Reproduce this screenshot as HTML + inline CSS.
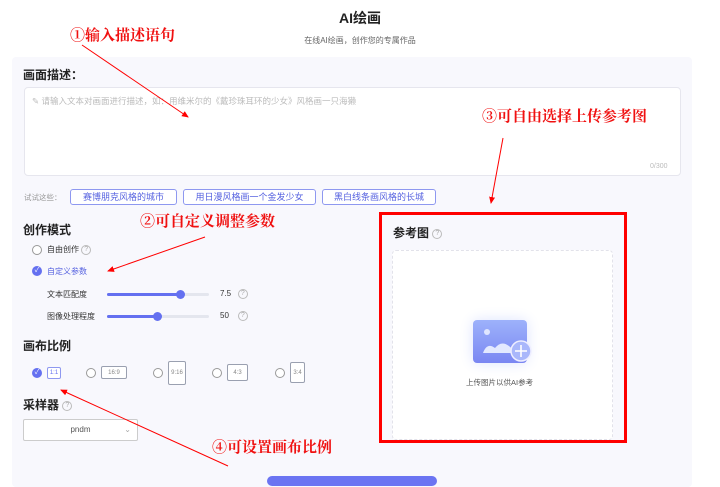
<!DOCTYPE html>
<html><head><meta charset="utf-8"><style>
*{margin:0;padding:0;box-sizing:border-box}
body{width:720px;height:481px;background:#fff;font-family:"Liberation Sans","Noto Sans CJK SC",sans-serif;position:relative;overflow:hidden;color:#222}
.a{position:absolute}
.panel{left:12px;top:57px;width:680px;height:430px;background:#f8f8fd;border-radius:4px}
.ta{left:24px;top:87px;width:657px;height:89px;background:#fff;border:1px solid #e6e6ee;border-radius:4px}
.h{font-size:12px;font-weight:bold;color:#222}
.tag{top:189px;height:16px;border:1px solid #8e98f0;border-radius:3px;font-size:9px;color:#5662e0;text-align:center;line-height:14px;background:#fff}
.red{font-family:"Noto Serif CJK SC",serif;color:#f01010;font-size:15px;font-weight:bold}
.q{display:inline-block;width:10px;height:10px;border:1px solid #bbb;border-radius:50%;font-size:7px;color:#aaa;text-align:center;line-height:8px;vertical-align:middle}
.rd{width:10px;height:10px;border:1px solid #999;border-radius:50%;background:#fff}
.ck{width:10px;height:10px;border-radius:50%;background:#6470f0;color:#fff;font-size:7px;text-align:center;line-height:10px}
.sm{font-size:8px;color:#333}
.box{border:1px solid #9aa0b0;border-radius:2px;font-size:6px;color:#888;background:#fff;display:flex;align-items:center;justify-content:center}
</style></head><body>
<div class="a" style="left:0;top:8px;width:720px;text-align:center;font-size:14px;font-weight:bold">AI绘画</div>
<div class="a" style="left:0;top:35px;width:720px;text-align:center;font-size:8px;color:#666">在线AI绘画，创作您的专属作品</div>
<div class="a panel"></div>
<div class="a h" style="left:23px;top:66px">画面描述：</div>
<div class="a ta"></div>
<div class="a" style="left:32px;top:95px;font-size:8.5px;color:#bbb">✎ 请输入文本对画面进行描述，如：用维米尔的《戴珍珠耳环的少女》风格画一只海獭</div>
<div class="a" style="left:650px;top:163px;font-size:7px;color:#bbb">0/300</div>
<div class="a" style="left:24px;top:192px;font-size:7.5px;color:#999">试试这些：</div>
<div class="a tag" style="left:70px;width:107px">赛博朋克风格的城市</div>
<div class="a tag" style="left:183px;width:133px">用日漫风格画一个金发少女</div>
<div class="a tag" style="left:322px;width:114px">黑白线条画风格的长城</div>
<div class="a h" style="left:23px;top:221px">创作模式</div>
<div class="a rd" style="left:32px;top:245px"></div>
<div class="a sm" style="left:47px;top:244px">自由创作 <span class="q">?</span></div>
<div class="a ck" style="left:32px;top:266px">✓</div>
<div class="a sm" style="left:47px;top:266px;color:#5662e0">自定义参数</div>
<div class="a sm" style="left:47px;top:289px">文本匹配度</div>
<div class="a" style="left:107px;top:293px;width:102px;height:3px;background:#e4e6ee;border-radius:2px"></div>
<div class="a" style="left:107px;top:293px;width:74px;height:3px;background:#6470f0;border-radius:2px"></div>
<div class="a" style="left:176px;top:290px;width:9px;height:9px;border-radius:50%;background:#6470f0"></div>
<div class="a sm" style="left:220px;top:289px">7.5 &nbsp;&nbsp;<span class="q">?</span></div>
<div class="a sm" style="left:47px;top:311px">图像处理程度</div>
<div class="a" style="left:107px;top:315px;width:102px;height:3px;background:#e4e6ee;border-radius:2px"></div>
<div class="a" style="left:107px;top:315px;width:50px;height:3px;background:#6470f0;border-radius:2px"></div>
<div class="a" style="left:153px;top:312px;width:9px;height:9px;border-radius:50%;background:#6470f0"></div>
<div class="a sm" style="left:220px;top:311px">50 &nbsp;&nbsp;&nbsp;<span class="q">?</span></div>
<div class="a h" style="left:23px;top:337px">画布比例</div>
<div class="a ck" style="left:32px;top:368px">✓</div>
<div class="a box" style="left:47px;top:367px;width:14px;height:12px;border-color:#8e98f0;color:#6470f0">1:1</div>
<div class="a rd" style="left:86px;top:368px"></div>
<div class="a box" style="left:101px;top:366px;width:26px;height:13px">16:9</div>
<div class="a rd" style="left:153px;top:368px"></div>
<div class="a box" style="left:168px;top:361px;width:18px;height:24px">9:16</div>
<div class="a rd" style="left:212px;top:368px"></div>
<div class="a box" style="left:227px;top:364px;width:21px;height:17px">4:3</div>
<div class="a rd" style="left:275px;top:368px"></div>
<div class="a box" style="left:290px;top:362px;width:15px;height:21px">3:4</div>
<div class="a h" style="left:23px;top:396px">采样器 <span class="q" style="font-weight:normal">?</span></div>
<div class="a" style="left:23px;top:419px;width:115px;height:22px;background:#fff;border:1px solid #ccc;border-radius:2px;font-size:8px;color:#555;text-align:center;line-height:20px">pndm<span style="position:absolute;right:6px;color:#aaa">⌄</span></div>
<div class="a" style="left:267px;top:476px;width:170px;height:10px;background:#6b74f2;border-radius:5px"></div>
<div class="a" style="left:379px;top:212px;width:248px;height:231px;border:3px solid #f00"></div>
<div class="a h" style="left:393px;top:224px">参考图 <span class="q" style="font-weight:normal">?</span></div>
<div class="a" style="left:392px;top:250px;width:221px;height:190px;background:#fff;border:1px dashed #e2e2ea;border-radius:4px"></div>
<div class="a" style="left:473px;top:320px;width:54px;height:43px;border-radius:4px;background:linear-gradient(#9db2fb,#7a86f2);box-shadow:0 0 14px #dde3ff"></div>
<svg class="a" style="left:473px;top:320px" width="60" height="50"><circle cx="14" cy="12" r="3" fill="#dfe6ff"/><path d="M10 33 Q14 22 22 28 Q30 18 40 30 L40 33 Z" fill="#e3e9ff"/><circle cx="48" cy="31" r="10" fill="#a9b7fb" stroke="#eef" stroke-width="1.5"/><path d="M48 25v12M42 31h12" stroke="#fff" stroke-width="1.6"/></svg>
<div class="a" style="left:466px;top:377px;font-size:7.5px;color:#555">上传图片以供AI参考</div>
<div class="a red" style="left:70px;top:24px">①输入描述语句</div>
<div class="a red" style="left:482px;top:105px">③可自由选择上传参考图</div>
<div class="a red" style="left:140px;top:210px">②可自定义调整参数</div>
<div class="a red" style="left:212px;top:436px">④可设置画布比例</div>
<svg class="a" style="left:0;top:0" width="720" height="481">
<defs><marker id="m" markerWidth="8" markerHeight="8" refX="6" refY="4" orient="auto"><path d="M0 1L7 4L0 7Z" fill="#f00"/></marker></defs>
<g stroke="#f00" stroke-width="1" fill="none" marker-end="url(#m)">
<line x1="82" y1="45" x2="188" y2="117"/>
<line x1="503" y1="138" x2="491" y2="203"/>
<line x1="205" y1="237" x2="108" y2="271"/>
<line x1="228" y1="466" x2="61" y2="390"/>
</g></svg>
</body></html>
